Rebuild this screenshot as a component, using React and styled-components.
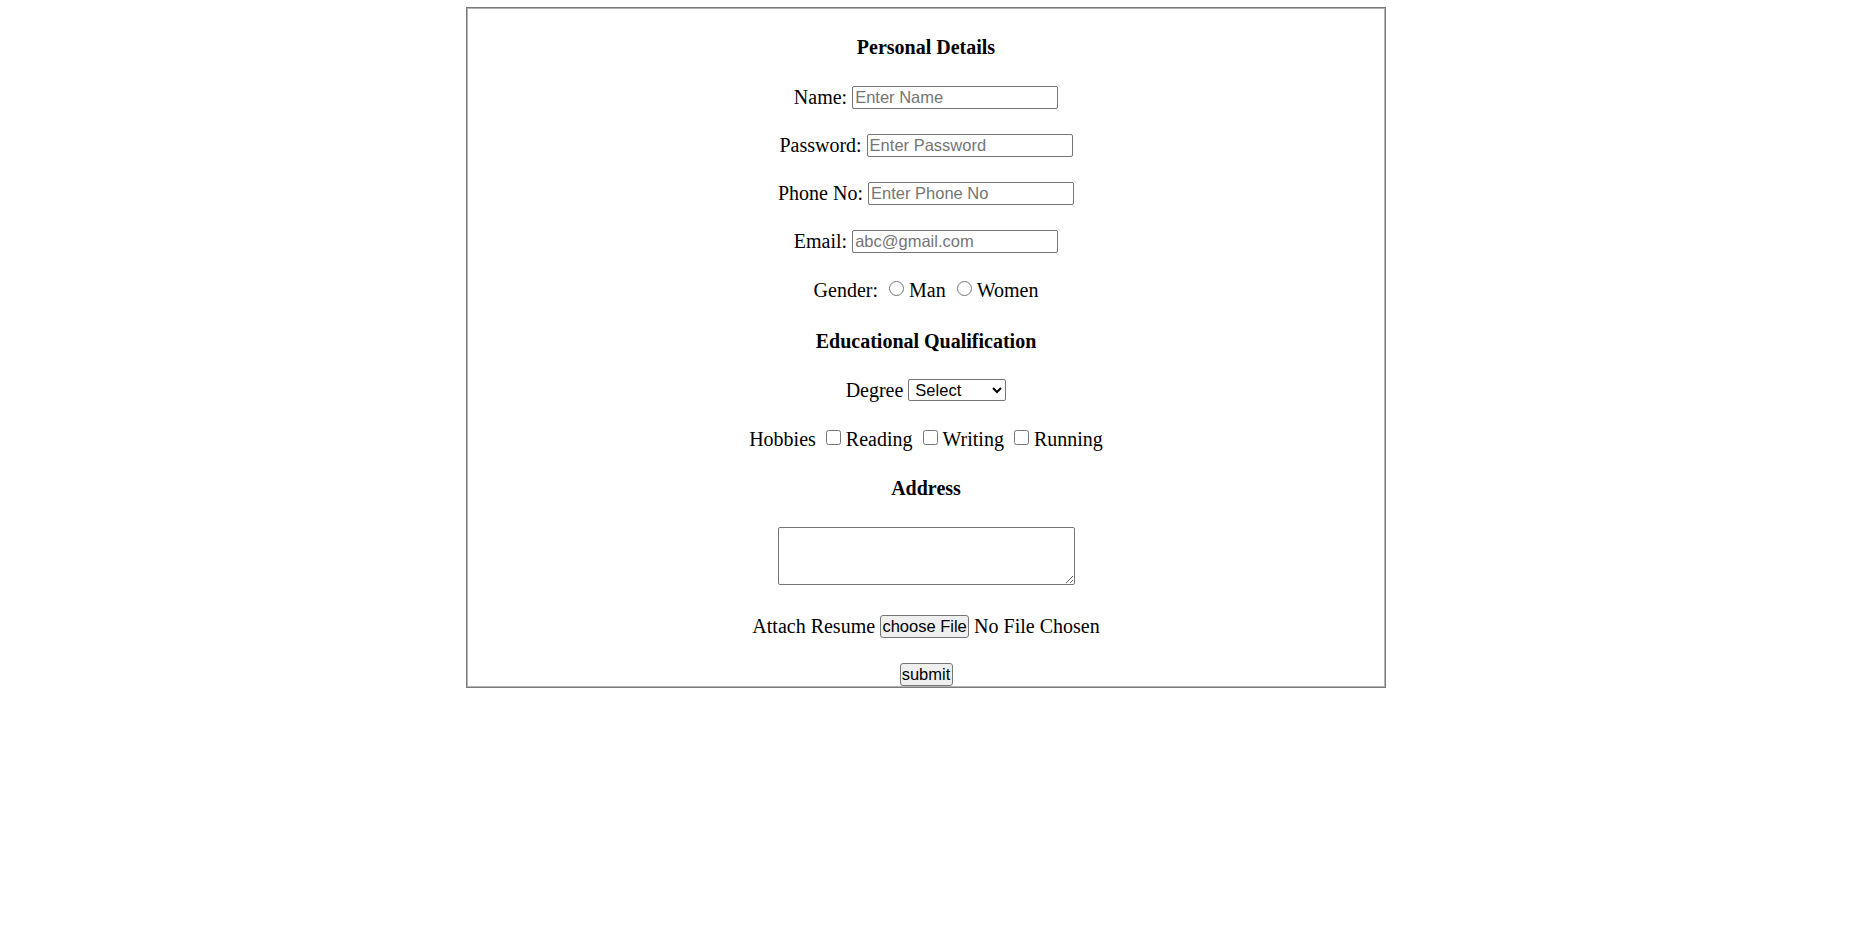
import React from 'react';
import styled, { createGlobalStyle } from 'styled-components';

const GlobalStyle = createGlobalStyle`
    body {
        margin: 0;
        padding-right: 3px;
        background: #ffffff;
        font-family: "Liberation Serif", "Times New Roman", serif;
        color: #000000;
    }
`;

function App() {
    return (
        <React.Fragment>
            <GlobalStyle />
            <FormCard onSubmit={(e) => e.preventDefault()}>
                <Heading $top={27}>Personal Details</Heading>

                <Row $top={26}>
                    <span>Name:</span>
                    <TextInput type="text" placeholder="Enter Name" />
                </Row>
                <Row $top={24}>
                    <span>Password:</span>
                    <TextInput type="password" placeholder="Enter Password" />
                </Row>
                <Row $top={24}>
                    <span>Phone No:</span>
                    <TextInput type="text" placeholder="Enter Phone No" />
                </Row>
                <Row $top={24}>
                    <span>Email:</span>
                    <TextInput type="email" placeholder="abc@gmail.com" />
                </Row>
                <Row $top={25}>
                    <span>Gender:</span>
                    <Radio type="radio" name="gender" />
                    <span>Man</span>
                    <Radio type="radio" name="gender" />
                    <span>Women</span>
                </Row>

                <Heading $top={27}>Educational Qualification</Heading>

                <Row $top={25}>
                    <span>Degree</span>
                    <Select defaultValue="select">
                        <option value="select">Select</option>
                        <option value="be">B.E</option>
                        <option value="btech">B.Tech</option>
                        <option value="me">M.E</option>
                    </Select>
                </Row>
                <Row $top={25}>
                    <span>Hobbies</span>
                    <Checkbox type="checkbox" />
                    <span>Reading</span>
                    <Checkbox type="checkbox" />
                    <span>Writing</span>
                    <Checkbox type="checkbox" />
                    <span>Running</span>
                </Row>

                <Heading $top={25}>Address</Heading>

                <AreaRow $top={27}>
                    <Address />
                </AreaRow>

                <Row $top={29}>
                    <span>Attach Resume</span>
                    <FormButton type="button" $width={89}>choose File</FormButton>
                    <span>No File Chosen</span>
                </Row>
                <AreaRow $top={25}>
                    <FormButton type="submit" $width={53}>submit</FormButton>
                </AreaRow>
            </FormCard>
        </React.Fragment>
    );
}

const FormCard = styled.form`
    width: 918px;
    margin: 7px auto 0;
    padding-bottom: 1px;
    border: 1px solid #7a7a7a;
    box-shadow: inset 0 0 0 1px #b4b4b4;
    display: flex;
    flex-direction: column;
    align-items: stretch;
    box-sizing: content-box;
`;

const Row = styled.div`
    margin-top: ${props => props.$top}px;
    height: 24px;
    display: flex;
    justify-content: center;
    align-items: center;
    gap: 5px;
    font-size: 20px;
    line-height: 24px;
    white-space: nowrap;
`;

const Heading = styled(Row)`
    font-weight: bold;
`;

const AreaRow = styled.div`
    margin-top: ${props => props.$top}px;
    display: flex;
    justify-content: center;
`;

const controlFont = `
    font-family: "Liberation Sans", Arial, sans-serif;
    font-size: 16.5px;
    color: #000000;
`;

const TextInput = styled.input`
    ${controlFont}
    width: 206px;
    height: 23px;
    box-sizing: border-box;
    padding: 1px 2px;
    margin: 0;
    border: 1px solid #767676;
    border-radius: 2px;
    background: #ffffff;

    &::placeholder {
        color: #757575;
    }
`;

const Radio = styled.input`
    width: 15px;
    height: 15px;
    margin: 0 0 3px 6px;
`;

const Checkbox = styled.input`
    width: 15px;
    height: 15px;
    margin: 0 0 3px 5px;
`;

const Select = styled.select`
    ${controlFont}
    width: 98px;
    height: 22px;
    box-sizing: border-box;
    margin: 0;
    padding: 0 2px;
    border: 1px solid #767676;
    border-radius: 2px;
    background: #ffffff;
`;

const Address = styled.textarea`
    width: 297px;
    height: 58px;
    box-sizing: border-box;
    margin: 0;
    border: 1px solid #767676;
    border-radius: 2px;
`;

const FormButton = styled.button`
    ${controlFont}
    width: ${props => props.$width}px;
    height: 23px;
    box-sizing: border-box;
    margin: 0;
    padding: 0 1px;
    background: #efefef;
    border: 1px solid #767676;
    border-radius: 3px;
    white-space: nowrap;
`;

export default App;
